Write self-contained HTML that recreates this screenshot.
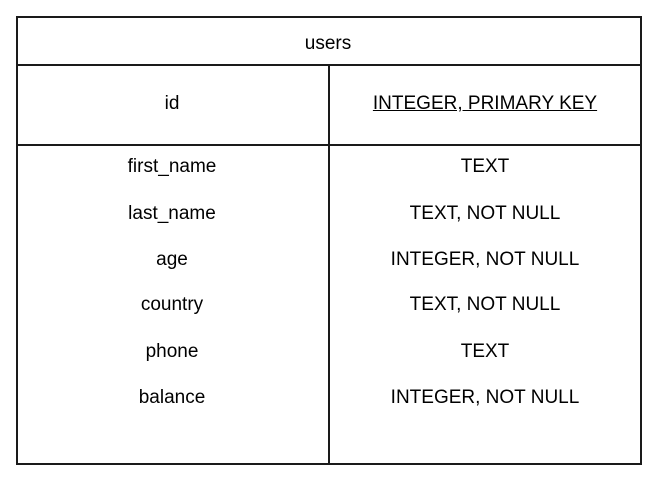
<!DOCTYPE html>
<html><head><meta charset="utf-8"><style>
html,body{margin:0;padding:0;background:#fff;}
body{width:658px;height:486px;position:relative;overflow:hidden;font-family:"Liberation Sans",sans-serif;font-size:19px;color:#000;}
.l{position:absolute;background:#1a1a1a;}
.t{position:absolute;width:300px;text-align:center;line-height:20px;white-space:nowrap;}
</style></head><body>
<div class="l" style="left:16px;top:16px;width:625px;height:2px"></div>
<div class="l" style="left:16px;top:463px;width:625px;height:2px"></div>
<div class="l" style="left:16px;top:16px;width:2px;height:449px"></div>
<div class="l" style="left:640px;top:16px;width:2px;height:449px"></div>
<div class="l" style="left:16px;top:64px;width:625px;height:2px"></div>
<div class="l" style="left:16px;top:144px;width:625px;height:2px"></div>
<div class="l" style="left:328px;top:64px;width:2px;height:400px"></div>
<div class="t" style="left:178px;top:34px">users</div>
<div class="t" style="left:22px;top:94px">id</div>
<div class="t" style="left:335px;top:94px;text-decoration:underline">INTEGER, PRIMARY KEY</div>
<div class="t" style="left:22px;top:157px">first_name</div>
<div class="t" style="left:335px;top:157px">TEXT</div>
<div class="t" style="left:22px;top:204px">last_name</div>
<div class="t" style="left:335px;top:204px">TEXT, NOT NULL</div>
<div class="t" style="left:22px;top:250px">age</div>
<div class="t" style="left:335px;top:250px">INTEGER, NOT NULL</div>
<div class="t" style="left:22px;top:295px">country</div>
<div class="t" style="left:335px;top:295px">TEXT, NOT NULL</div>
<div class="t" style="left:22px;top:342px">phone</div>
<div class="t" style="left:335px;top:342px">TEXT</div>
<div class="t" style="left:22px;top:388px">balance</div>
<div class="t" style="left:335px;top:388px">INTEGER, NOT NULL</div>
</body></html>
